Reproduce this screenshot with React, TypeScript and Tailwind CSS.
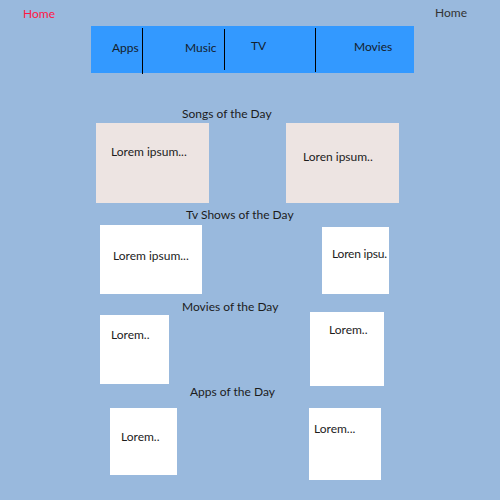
import React from "react";

function Card({ className, text, textClass }: { className: string; text: string; textClass: string }) {
  return (
    <div className={"shrink-0 overflow-hidden whitespace-nowrap " + className}>
      <div className={textClass}>{text}</div>
    </div>
  );
}

export default function App() {
  return (
    <div
      className="w-[500px] h-[500px] overflow-hidden bg-[#99b9dd] text-[12px] leading-[16px] text-[#1c1c1c]"
      style={{ fontFamily: "Lato, 'Open Sans', sans-serif" }}
    >
      {/* header */}
      <div className="flex justify-between pt-[6px] pl-[23px] pr-[33px]">
        <span className="text-[#ff1744]">Home</span>
        <span className="text-[#333333] -mt-[1px]">Home</span>
      </div>

      {/* nav bar */}
      <div className="ml-[91px] mt-[4px] w-[323px] h-[47px] bg-[#3399ff] flex items-start text-[#14202c]">
        <div className="w-[51px] pl-[21px] pt-[14px]">Apps</div>
        <div className="w-px h-[46px] mt-[2px] bg-black" />
        <div className="w-[81px] pl-[42px] pt-[14px]">Music</div>
        <div className="w-px h-[41px] mt-[3px] bg-black" />
        <div className="w-[90px] pl-[26px] pt-[12px]">TV</div>
        <div className="w-px h-[44px] mt-[2px] bg-black" />
        <div className="flex-1 pl-[38px] pt-[13px]">Movies</div>
      </div>

      {/* Songs */}
      <div className="mt-[33px] pl-[182px]">Songs of the Day</div>
      <div className="mt-[1px] flex items-start">
        <Card className="ml-[96px] w-[113px] h-[80px] bg-[#ede4e2]" text="Lorem ipsum..." textClass="pl-[15px] pt-[21px]" />
        <Card className="ml-[77px] w-[113px] h-[80px] bg-[#ede4e2]" text="Loren ipsum.." textClass="pl-[17px] pt-[26px]" />
      </div>

      {/* TV */}
      <div className="mt-[4px] pl-[186px]">Tv Shows of the Day</div>
      <div className="mt-[2px] flex items-start">
        <Card className="ml-[100px] w-[102px] h-[69px] bg-white" text="Lorem ipsum..." textClass="pl-[13px] pt-[23px]" />
        <Card className="ml-[120px] mt-[2px] w-[67px] h-[67px] bg-white" text="Loren ipsu." textClass="pl-[10px] pt-[19px] tracking-[-0.2px]" />
      </div>

      {/* Movies */}
      <div className="mt-[5px] pl-[182px]">Movies of the Day</div>
      <div className="-mt-[3px] flex items-start">
        <Card className="ml-[100px] mt-[3px] w-[69px] h-[69px] bg-white" text="Lorem.." textClass="pl-[11px] pt-[12px]" />
        <Card className="ml-[141px] w-[74px] h-[74px] bg-white" text="Lorem.." textClass="pl-[19px] pt-[10px]" />
      </div>

      {/* Apps */}
      <div className="mt-[-2px] pl-[190px] relative">Apps of the Day</div>
      <div className="mt-[8px] flex items-start">
        <Card className="ml-[110px] w-[67px] h-[67px] bg-white" text="Lorem.." textClass="pl-[11px] pt-[21px]" />
        <Card className="ml-[132px] w-[72px] h-[72px] bg-white" text="Lorem..." textClass="pl-[5px] pt-[13px]" />
      </div>
    </div>
  );
}
